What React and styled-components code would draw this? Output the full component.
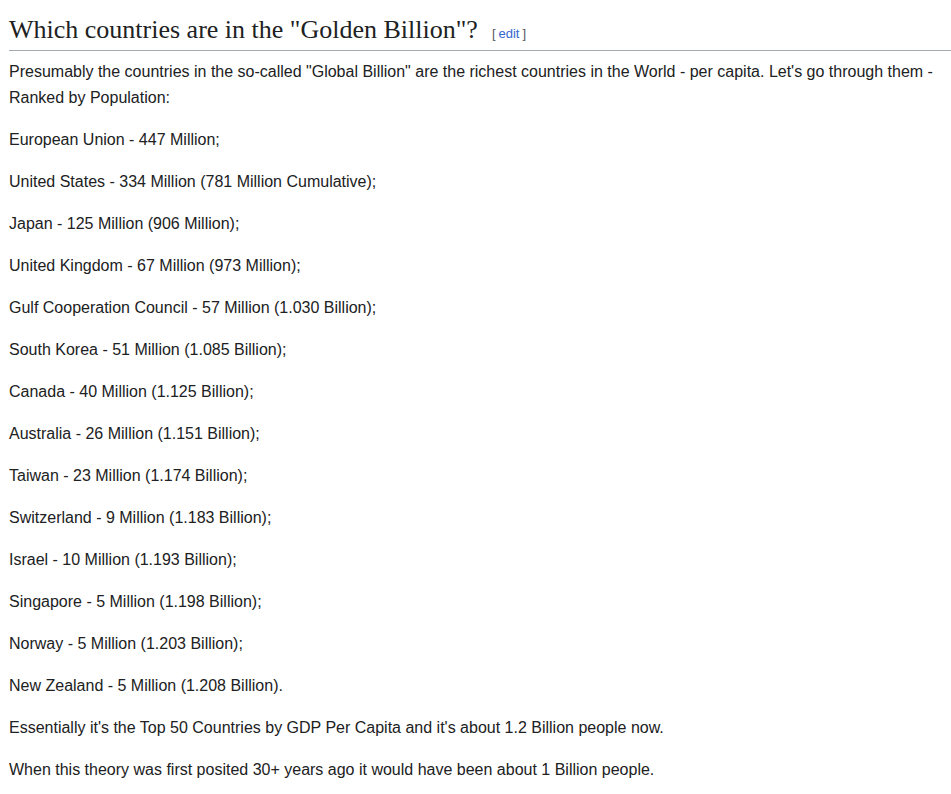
import React from 'react';
import styled, { createGlobalStyle } from 'styled-components';

var GlobalStyle = createGlobalStyle`
    html, body {
        margin: 0;
        padding: 0;
        background: #ffffff;
    }
`

var Page = styled.div`
    padding: 1px 0 0 9px;
    color: #202122;
    font-family: "Liberation Sans", Arial, sans-serif;
    font-size: 16px;
    line-height: 26px;
`

var Heading = styled.h2`
    margin: 0;
    padding: 13px 0 5px 0;
    border-bottom: 1px solid #a2a9b1;
    font-family: "Liberation Serif", Georgia, serif;
    font-weight: normal;
    font-size: 26px;
    line-height: 31px;
    display: flex;
    align-items: baseline;
`

var EditLink = styled.span`
    margin-left: 14px;
    font-family: "Liberation Sans", Arial, sans-serif;
    font-size: 13px;
    line-height: 1;
    color: #54595d;

    a {
        color: #3366cc;
        text-decoration: none;
        padding: 0 3px;
    }
`

var Body = styled.div`
    padding-top: 8px;
`

var Para = styled.p`
    margin: 0 0 16px 0;
`

var lines = [
    "European Union - 447 Million;",
    "United States - 334 Million (781 Million Cumulative);",
    "Japan - 125 Million (906 Million);",
    "United Kingdom - 67 Million (973 Million);",
    "Gulf Cooperation Council - 57 Million (1.030 Billion);",
    "South Korea - 51 Million (1.085 Billion);",
    "Canada - 40 Million (1.125 Billion);",
    "Australia - 26 Million (1.151 Billion);",
    "Taiwan - 23 Million (1.174 Billion);",
    "Switzerland - 9 Million (1.183 Billion);",
    "Israel - 10 Million (1.193 Billion);",
    "Singapore - 5 Million (1.198 Billion);",
    "Norway - 5 Million (1.203 Billion);",
    "New Zealand - 5 Million (1.208 Billion).",
    "Essentially it's the Top 50 Countries by GDP Per Capita and it's about 1.2 Billion people now.",
    "When this theory was first posited 30+ years ago it would have been about 1 Billion people.",
];

export default function App() {
    return (
        <>
            <GlobalStyle />
            <Page>
                <Heading>
                    <span>Which countries are in the "Golden Billion"?</span>
                    <EditLink>[<a href="#">edit</a>]</EditLink>
                </Heading>
                <Body>
                    <Para>
                        Presumably the countries in the so-called "Global Billion" are the richest countries in the World - per capita. Let's go through them - Ranked by Population:
                    </Para>
                    {lines.map((line) => (
                        <Para key={line}>{line}</Para>
                    ))}
                </Body>
            </Page>
        </>
    )
}
